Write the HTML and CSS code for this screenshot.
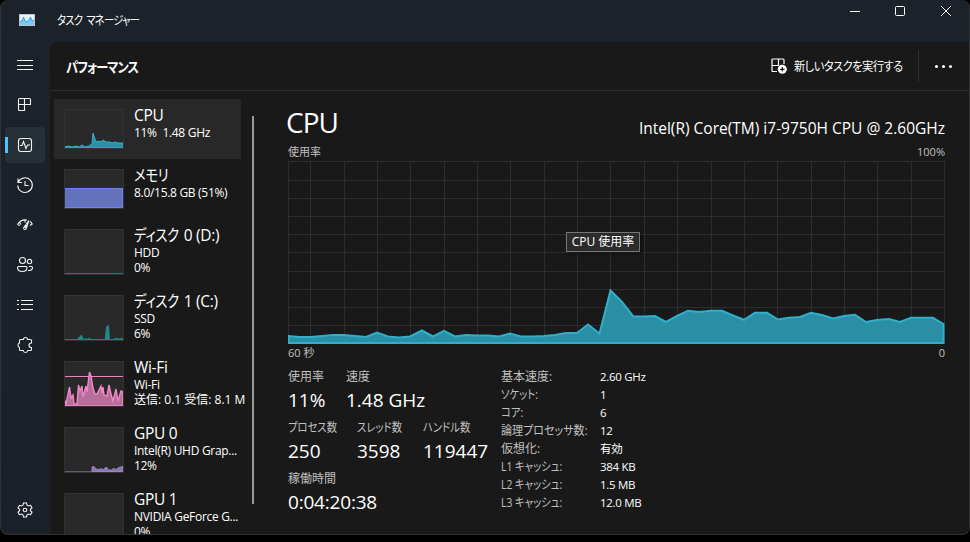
FILE: index.html
```html
<!DOCTYPE html>
<html lang="ja">
<head>
    <meta charset="UTF-8">
    <title>タスク マネージャー</title>
    <link rel="stylesheet" href="styles.css">
</head>
<body>
<div class="window">
    <header class="titlebar">
        <svg class="app-icon" width="16" height="12" viewBox="0 0 16 12">
            <rect width="16" height="12" fill="#b9c4cc"/>
            <rect x="1" y="1" width="14" height="10" fill="#e6f3fb"/>
            <path d="M1 8L3 7L4.500 3L6 7L8 8L10 6L11.500 3L13 7L15 6V11H1Z" fill="#7cc8f4"/>
            <path d="M1 8L3 7L4.500 3L6 7L8 8L10 6L11.500 3L13 7L15 6" fill="none" stroke="#3a9be0"/>
        </svg>
        <span class="app-name">タスク マネージャー</span>
        <div class="caption">
            <svg width="12" height="12" viewBox="0 0 12 12"><path d="M1 6.500H11"/></svg>
            <svg width="12" height="12" viewBox="0 0 12 12"><rect x="1.500" y="1.500" width="9" height="9" rx="1"/></svg>
            <svg width="12" height="12" viewBox="0 0 12 12"><path d="M1 1L11 11M11 1L1 11"/></svg>
        </div>
    </header>
    <div class="body">
        <nav class="rail">
            <a class="rail-item"><svg width="18" height="18" viewBox="0 0 18 18"><path d="M1 4.500H17M1 9.500H17M1 13.500H17"/></svg></a>
            <a class="rail-item"><svg width="18" height="18" viewBox="0 0 18 18"><path d="M3 2.500H13.500Q14.500 2.500 14.500 3.500V8.500H2.500M8.500 2.500V14.500H3.500Q2.500 14.500 2.500 13.500V3.500Q2.500 2.500 3.500 2.500"/></svg></a>
            <a class="rail-item selected"><svg width="18" height="18" viewBox="0 0 18 18"><rect x="2.500" y="2.500" width="13" height="13" rx="2.500"/><path d="M4 9.500H6L7.500 5.500L10 12.500L11.500 9H14"/></svg></a>
            <a class="rail-item"><svg width="18" height="18" viewBox="0 0 18 18"><path d="M2 2.500V6.500H6M2.300 6.200A7.300 7.300 0 1 1 1.700 9.500M9 5V9.500H12.500"/></svg></a>
            <a class="rail-item"><svg width="18" height="18" viewBox="0 0 18 18"><path d="M1.500 8.500A9.500 9.500 0 0 1 11 4M13.800 5.300Q15.500 6.500 16.500 8.500M3.500 6L5 8.500M9 4V6.500M16 8L14 9.500M1.500 8.500L4 9.500"/><path d="M12.800 4.500L7.800 11.500Q7.300 13.500 9 13.500Q10.300 13.500 10.500 12ZM10.500 9L9 12"/></svg></a>
            <a class="rail-item"><svg width="18" height="18" viewBox="0 0 18 18"><circle cx="6.500" cy="4.500" r="3"/><circle cx="13.500" cy="5.500" r="2.200"/><path d="M3 10.500H10Q11 10.500 11 11.500Q11 15.500 6.500 15.500Q1.500 15.500 1.500 11.500Q1.500 10.500 3 10.500M13 10.500H15.500Q16.500 10.500 16.500 11.500Q16.500 14.500 13 14.500H12"/></svg></a>
            <a class="rail-item"><svg width="18" height="18" viewBox="0 0 18 18"><path d="M5 4.500H17M5 8.500H17M5 13.500H17M1 4.500H3M1 8.500H3M1 13.500H3"/></svg></a>
            <a class="rail-item"><svg width="18" height="18" viewBox="0 0 18 18"><path d="M4.500 3.500H7.500Q7.500 1.500 9.500 1.500Q11.500 1.500 11.500 3.500H14.500Q15.500 3.500 15.500 4.500V7Q13 7 13 9.200Q13 11.500 15.500 11.500V13.500Q15.500 14.500 14.500 14.500H11.800Q11.500 16.500 9.500 16.500Q7.500 16.500 7.200 14.500H4.500Q3.500 14.500 3.500 13.500V11.500Q2 11.300 2 9.200Q2 7.200 3.500 7V4.500Q3.500 3.500 4.500 3.500Z"/></svg></a>
            <a class="rail-item settings"><svg width="18" height="18" viewBox="0 0 18 18"><path d="M7.500 2H10.500L11 4.200L12.500 5L14.600 4.300L16 6.900L14.400 8.300V9.700L16 11.100L14.600 13.700L12.500 13L11 13.800L10.500 16H7.500L7 13.800L5.500 13L3.400 13.700L2 11.100L3.600 9.700V8.300L2 6.900L3.400 4.300L5.500 5L7 4.200Z"/><circle cx="9" cy="9" r="1.800"/></svg></a>
        </nav>
        <section class="content">
            <div class="toolbar">
                <h1>パフォーマンス</h1>
                <div class="run-task">
                    <svg width="16" height="16" viewBox="0 0 16 16"><path d="M6 13.500H2Q1 13.500 1 12.500V2Q1 1 2 1H12Q13 1 13 2V6M1 7.500H8M7.500 1V8" fill="none" stroke="#fff" stroke-width="1.200"/><circle cx="11.300" cy="11.300" r="4.500" fill="#fff"/><path d="M11.300 9V13.600M9 11.300H13.600" stroke="#191919" stroke-width="1.200"/></svg>
                    <span>新しいタスクを実行する</span>
                </div>
                <div class="more"><i></i><i></i><i></i></div>
            </div>
            <div class="panes">
                <aside class="devices">
                    <div class="device active">
                        <svg class="thumb" width="60" height="40" viewBox="0 0 60 40"><path d="M0 38L5 37L8 38L12 37L15 38L18 36L21 38L25 37L28 35L29 24L31 30L32 33L35 32L37 33L39 31L42 33L46 33L48 34L51 33L54 34L59 34V39H0Z" fill="#2a8fa7" stroke="#31b1ce"/></svg>
                        <div class="info"><b>CPU</b><span>11%&nbsp; 1.48 GHz</span></div>
                    </div>
                    <div class="device">
                        <svg class="thumb" width="60" height="40" viewBox="0 0 60 40"><rect x="0.500" y="19.500" width="58" height="19" fill="#6472bd" stroke="#6f81ed"/></svg>
                        <div class="info"><b class="narrow">メモリ</b><span>8.0/15.8 GB (51%)</span></div>
                    </div>
                    <div class="device tall">
                        <svg class="thumb" width="60" height="46" viewBox="0 0 60 46"><path d="M0 44.500H59" stroke="#2a7478"/></svg>
                        <div class="info"><b><span class="narrow disk">ディスク</span> 0 (D:)</b><span>HDD</span><span>0%</span></div>
                    </div>
                    <div class="device tall">
                        <svg class="thumb" width="60" height="46" viewBox="0 0 60 46"><path d="M0 44.500H13L17.500 40L19 44H24L25 43L27 44.500H41L42.500 32L44.500 30L45.500 44.500H50L51 43L55 44L58 43L59 44.500Z" fill="#238c8e" stroke="#237c80"/></svg>
                        <div class="info"><b><span class="narrow disk">ディスク</span> 1 (C:)</b><span>SSD</span><span>6%</span></div>
                    </div>
                    <div class="device tall">
                        <svg class="thumb" width="60" height="46" viewBox="0 0 60 46"><path d="M1 15.500H59" stroke="#e884c0"/><path d="M0 38L2 43L5.500 26L7 37L9 34L10 43H13L14.500 24L16 30L18 25L19 36L22 25L23 31L25.500 11L27 15L29 27L31 33H33L37 25L38 32L39 26L40 34L43 35L45 24L47 33L49 40L52 28L54 40L57 30L59 31V45H0Z" fill="#b66e9a" stroke="#f088c6" stroke-width="1.400"/></svg>
                        <div class="info"><b>Wi-Fi</b><span>Wi-Fi</span><span class="net">送信: 0.1 受信: 8.1 M</span></div>
                    </div>
                    <div class="device tall">
                        <svg class="thumb" width="60" height="46" viewBox="0 0 60 46"><path d="M0 44.500H28" stroke="#625878"/><path d="M28 44.500V40L30 39.500L32 42L35 42.500L37 41.500L39 43L41 41L43 40.500L44 43H48L49 41.500L52 42.500L55 40.500L59 39.500V44.500Z" fill="#8b75ae" stroke="#9b84c6"/></svg>
                        <div class="info"><b>GPU 0</b><span>Intel(R) UHD Grap...</span><span>12%</span></div>
                    </div>
                    <div class="device tall">
                        <svg class="thumb" width="60" height="46" viewBox="0 0 60 46"></svg>
                        <div class="info"><b>GPU 1</b><span>NVIDIA GeForce G...</span><span>0%</span></div>
                    </div>
                    <div class="scrollbar"></div>
                </aside>
                <main class="detail">
                    <div class="detail-head">
                        <h2>CPU</h2>
                        <span class="model">Intel(R) Core(TM) i7-9750H CPU @ 2.60GHz</span>
                    </div>
                    <div class="axis top"><span>使用率</span><span>100%</span></div>
                    <div class="chart">
                        <svg width="657" height="183" viewBox="0 0 657 183">
                            <path class="grid" d="M0.500 0V183M22.500 0V183M56.500 0V183M89.500 0V183M122.500 0V183M156.500 0V183M189.500 0V183M222.500 0V183M256.500 0V183M289.500 0V183M322.500 0V183M356.500 0V183M389.500 0V183M423.500 0V183M456.500 0V183M489.500 0V183M523.500 0V183M556.500 0V183M589.500 0V183M623.500 0V183M656.500 0V183"/>
                            <path class="grid" d="M0 0.500H656M0 19.500H656M0 37.500H656M0 55.500H656M0 73.500H656M0 91.500H656M0 110.500H656M0 128.500H656M0 146.500H656M0 164.500H656M0 182.500H656"/>
                            <path class="area" d="M0.500 175L11 176H23L34 175L45 174H56L67 175L78 176L89 171.500L100 175.500L111 176.500L122 175.500L134 169.500L145 175.500L156 169.800L167 175.500L178 174L189 174.500H200L211 175.500L222 172.500L233 175.500H245L256 175L267 174L278 172H289L300 163.500L311.500 172.500L322.500 129.500L334 141L345.500 155.500H356L367 155L378 161L389 155L400 149.800L411 151L423 149.800H434L445 154.500L456 158.800L467 151.800H479L490 158.500L501 156.800L512 156L523 151.800L534 154L545 157.500L556 155L567 153.800L578 161L589 159L601 158L612 161L623 156.800H645L655.500 163V182H0.500Z"/>
                        </svg>
                        <div class="tooltip">CPU 使用率</div>
                    </div>
                    <div class="axis bottom"><span>60 秒</span><span>0</span></div>
                    <div class="stats">
                        <div class="counters">
                            <div class="row usage">
                                <div><label>使用率</label><strong>11%</strong></div>
                                <div><label>速度</label><strong>1.48 GHz</strong></div>
                            </div>
                            <div class="row counts">
                                <div><label class="narrow">プロセス数</label><strong>250</strong></div>
                                <div><label class="narrow">スレッド数</label><strong>3598</strong></div>
                                <div><label class="narrow">ハンドル数</label><strong>119447</strong></div>
                            </div>
                            <div class="row">
                                <div><label>稼働時間</label><strong class="uptime">0:04:20:38</strong></div>
                            </div>
                        </div>
                        <dl class="specs">
                            <dt>基本速度:</dt><dd>2.60 GHz</dd>
                            <dt class="narrow">ソケット:</dt><dd>1</dd>
                            <dt class="narrow">コア:</dt><dd>6</dd>
                            <dt class="narrow cores">論理プロセッサ数:</dt><dd>12</dd>
                            <dt>仮想化:</dt><dd>有効</dd>
                            <dt class="narrow">L1 キャッシュ:</dt><dd>384 KB</dd>
                            <dt class="narrow">L2 キャッシュ:</dt><dd>1.5 MB</dd>
                            <dt class="narrow">L3 キャッシュ:</dt><dd>12.0 MB</dd>
                        </dl>
                    </div>
                </main>
            </div>
        </section>
    </div>
</div>
</body>
</html>
```
FILE: styles.css
```css
* {
    box-sizing: border-box;
}
body {
    margin: 0;
    height: 542px;
    background: #000;
    color: #fff;
    font-family: "Open Sans", "Noto Sans CJK JP", sans-serif;
    font-size: 12px;
    font-feature-settings: "palt";
    white-space: nowrap;
    overflow: hidden;
}
h1, h2, dl, dd {
    margin: 0;
}
/* condensed kana */
.narrow {
    transform: scaleX(0.86);
    transform-origin: left;
}
.window {
    display: flex;
    flex-direction: column;
    width: 970px;
    height: 535px;
    background: linear-gradient(#1b2229, #1a212a);
    border: solid #303234;
    border-width: 0 1px 1px;
    border-radius: 8px;
    overflow: hidden;
}
.titlebar {
    display: flex;
    height: 42px;
    flex-shrink: 0;
}
.app-icon {
    margin: 14px 22px 0 18px;
}
.app-name {
    margin-top: 12px;
    line-height: 18px;
    letter-spacing: -0.8px;
    word-spacing: 2px;
    transform: scaleX(0.86);
    transform-origin: left;
}
.caption {
    display: flex;
    gap: 33px;
    margin: 5px 17px 0 auto;
}
.caption svg {
    fill: none;
    stroke: #fff;
}
.caption svg:not(:last-child) {
    margin-left: -1px;
    margin-right: 1px;
}
.body {
    display: flex;
    flex: 1;
    min-height: 0;
}
.rail {
    display: flex;
    flex-direction: column;
    gap: 4px;
    width: 49px;
    padding: 5px 5px 6px 4px;
}
.rail-item {
    display: flex;
    align-items: center;
    justify-content: center;
    height: 36px;
    border-radius: 4px;
}
.rail-item svg {
    fill: none;
    stroke: #f4f4f4;
    stroke-width: 1.1;
}
.rail-item.selected {
    background: linear-gradient(#4cc2ff, #4cc2ff) 0 10px / 3px 16px no-repeat #283037;
}
.settings {
    margin-top: auto;
}
.content {
    display: flex;
    flex-direction: column;
    flex: 1;
    min-width: 0;
    background: #191919;
    border-top-left-radius: 7px;
}
.toolbar {
    display: flex;
    align-items: center;
    height: 49px;
    flex-shrink: 0;
    padding: 0 17px 0 16px;
    border-bottom: 1px solid #2d2e31;
}
.toolbar h1 {
    margin: 2px auto 0 0;
    font-size: 14px;
    line-height: 20px;
    letter-spacing: -1px;
    transform: scaleX(0.87);
    transform-origin: left;
}
.run-task {
    display: flex;
    align-items: center;
    height: 32px;
    padding-right: 15px;
    border-right: 1px solid #303030;
    letter-spacing: -0.6px;
}
.run-task span {
    transform: scaleX(0.94);
    transform-origin: right;
}
.more {
    display: flex;
    gap: 4px;
    padding: 1px 0 0 16px;
}
.more i {
    width: 3px;
    height: 3px;
    border-radius: 50%;
    background: #fff;
}
.panes {
    display: flex;
    flex: 1;
    min-height: 0;
}
.devices {
    position: relative;
    width: 212px;
    padding: 8px 0 0 4px;
    overflow: hidden;
}
.device {
    display: flex;
    gap: 10px;
    width: 191px;
    height: 60px;
    padding: 10px 0 0 10px;
    overflow: hidden;
}
.device.active {
    width: 187px;
    background: #282828;
}
.device.tall {
    height: 66px;
}
.thumb {
    flex-shrink: 0;
    background: #292929;
    outline: 1px solid #333;
    outline-offset: -1px;
}
.info {
    display: flex;
    flex-direction: column;
    margin-top: -4px;
    line-height: 15.3px;
    letter-spacing: -0.3px;
    font-size: 12px;
}
.info b {
    height: 20px;
    font-size: 15.5px;
    font-weight: normal;
    line-height: 20px;
}
.disk {
    display: inline-block;
    margin-right: -6px;
    line-height: 20px;
}
.net {
    letter-spacing: 0;
}
.scrollbar {
    position: absolute;
    left: 202px;
    top: 25px;
    width: 2px;
    height: 388px;
    background: #9a9a9a;
}
.detail {
    flex: 1;
    padding: 13px 24px 0 26px;
}
.detail-head {
    display: flex;
    justify-content: space-between;
    height: 39px;
}
.detail-head h2 {
    margin-left: -2px;
    font-size: 28px;
    font-weight: normal;
    line-height: 37px;
    letter-spacing: -1px;
}
.model {
    padding-top: 14px;
    font-size: 15.5px;
    line-height: 20px;
}
.axis {
    display: flex;
    justify-content: space-between;
    height: 18px;
    color: #c0c0c0;
    font-size: 11px;
    line-height: 17px;
}
.axis.bottom {
    height: 24px;
    line-height: 18px;
}
.chart {
    position: relative;
    height: 183px;
}
.chart svg {
    display: block;
}
.grid {
    fill: none;
    stroke: #2d2d2d;
}
.area {
    fill: #2c9eb8;
    fill-opacity: 0.88;
    stroke: #31aecb;
    stroke-width: 2;
}
.tooltip {
    position: absolute;
    left: 278px;
    top: 71px;
    width: 74px;
    height: 20px;
    border: 1px solid #767676;
    background: #2b2b2b;
    text-align: center;
    line-height: 18px;
    box-shadow: 2px 2px 2px rgba(0,0,0,0.4);
}
.stats {
    display: flex;
}
.counters {
    width: 213px;
}
.row {
    display: flex;
    height: 51px;
}
.row label {
    display: block;
    height: 18px;
    color: #c0c0c0;
    line-height: 18px;
}
.row strong {
    display: block;
    font-size: 19px;
    font-weight: normal;
    line-height: 29px;
}
.row .uptime {
    letter-spacing: -0.2px;
}
.usage div:first-child {
    width: 58px;
}
.counts div:first-child {
    width: 69px;
}
.counts div:nth-child(2) {
    width: 66px;
}
.specs {
    display: grid;
    grid-template-columns: 99px auto;
    grid-auto-rows: 18px;
    line-height: 18px;
}
.specs dt {
    color: #c0c0c0;
}
.specs .cores {
    transform: scaleX(0.92);
}
.specs dd {
    font-size: 11.5px;
    letter-spacing: -0.3px;
}
```
